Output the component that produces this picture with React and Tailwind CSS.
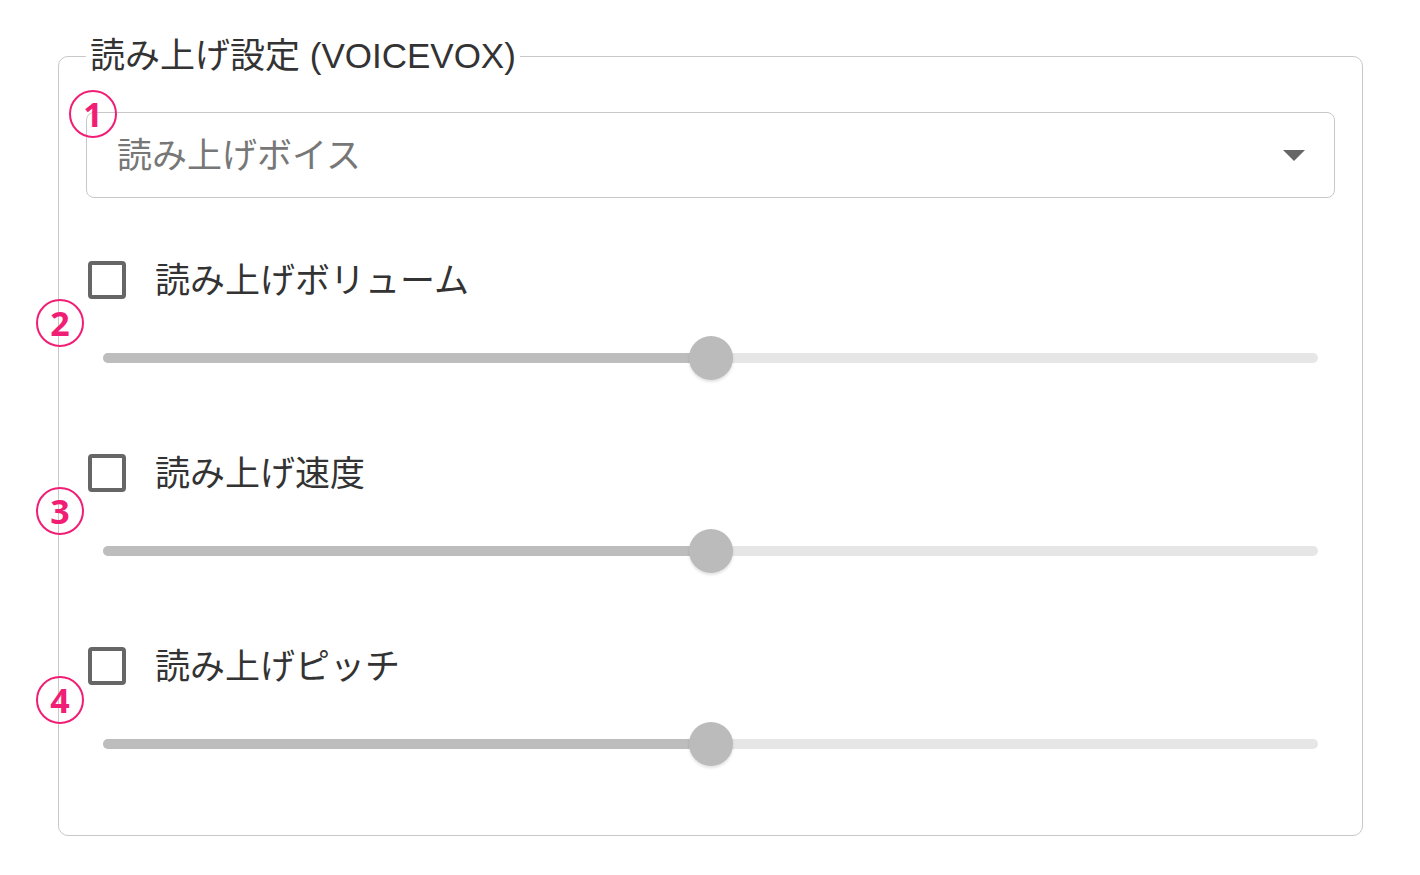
const font = { fontFamily: '"Liberation Sans", "Noto Sans CJK JP", sans-serif' };

function Badge({ n, className }) {
  return (
    <div
      className={`absolute w-[48px] h-[48px] rounded-full border-2 border-[#f01e74] flex items-center justify-center text-[#f01e74] text-[34px] leading-none font-bold ${className}`}
      style={{ fontFamily: '"Noto Sans", sans-serif' }}
    >
      {n}
    </div>
  );
}

function SliderSection({ label, value }) {
  return (
    <div className="flex flex-col gap-[35px]">
      <div className="flex items-center gap-[29px] h-[42px] pl-[29px]">
        <div className="w-[38px] h-[38px] rounded-[4px] border-[4px] border-[#666]" />
        <span className="text-[35px] leading-none text-[#333]">{label}</span>
      </div>
      <div className="h-[44px] px-[44px] flex items-center">
        <div className="relative w-full h-[10px] rounded-full bg-[#e6e6e6]">
          <div className="absolute left-0 top-0 h-full rounded-full bg-[#bdbdbd]" style={{ width: `${value}%` }} />
          <div
            className="absolute top-1/2 w-[44px] h-[44px] -translate-x-1/2 -translate-y-1/2 rounded-full bg-[#bbbbbb] shadow-[0_2px_3px_rgba(0,0,0,0.12)]"
            style={{ left: `${value}%` }}
          />
        </div>
      </div>
    </div>
  );
}

export default function App() {
  return (
    <div className="relative w-[1420px] h-[875px] bg-white" style={font}>
      <div className="pt-[36px] pl-[58px]">
        <fieldset className="w-[1305px] border border-[#c8c8c8] rounded-[10px] p-0 m-0 min-w-0">
          <legend className="ml-[27px] px-[4px] text-[35px] leading-[40px] text-[#333]">
            読み上げ設定 (VOICEVOX)
          </legend>
          <div className="flex flex-col gap-[61px] pt-[36px] pb-[69px]">
            <div className="mx-[27px] h-[86px] rounded-[8px] border-[1.5px] border-[#c8c8c8] flex items-center justify-between pl-[30px] pr-[29px]">
              <span className="text-[35px] leading-none text-[#777]">読み上げボイス</span>
              <div className="w-0 h-0 border-l-[11px] border-r-[11px] border-t-[11px] border-l-transparent border-r-transparent border-t-[#666]" />
            </div>
            <div className="flex flex-col gap-[72px]">
              <SliderSection label="読み上げボリューム" value={50} />
              <SliderSection label="読み上げ速度" value={50} />
              <SliderSection label="読み上げピッチ" value={50} />
            </div>
          </div>
        </fieldset>
      </div>
      <Badge n="1" className="left-[69px] top-[90px]" />
      <Badge n="2" className="left-[36px] top-[299px]" />
      <Badge n="3" className="left-[36px] top-[487px]" />
      <Badge n="4" className="left-[36px] top-[676px]" />
    </div>
  );
}
